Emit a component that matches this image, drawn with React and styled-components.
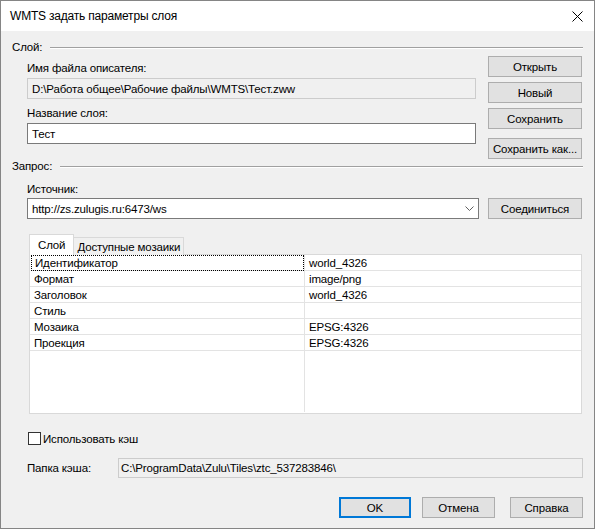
import React from "react";
import styled, { createGlobalStyle } from "styled-components";

const GlobalStyle = createGlobalStyle`
  html, body {
    margin: 0;
    padding: 0;
    background: #ffffff;
  }
  body {
    font-family: "Liberation Sans", Arial, sans-serif;
    font-size: 11.5px;
    letter-spacing: -0.15px;
    color: #000000;
  }
`;

const Window = styled.div`
  width: 595px;
  height: 529px;
  box-sizing: border-box;
  border: 1px solid #858585;
  display: flex;
  flex-direction: column;
  background: #f0f0f0;
`;

const TitleBar = styled.div`
  height: 30px;
  background: #ffffff;
  display: flex;
  align-items: center;
  justify-content: space-between;
  padding: 0 11px 0 9px;
  font-size: 12px;
  letter-spacing: -0.2px;
`;

const Body = styled.div`
  flex: 1;
  display: flex;
  flex-direction: column;
  padding: 0 11px 0 11px;
`;

const GroupHeader = styled.div`
  display: flex;
  align-items: center;
  height: 15px;
  margin-top: ${(p) => p.$top || 0}px;
  line-height: 15px;

  &::after {
    content: "";
    flex: 1;
    margin-left: 8px;
    height: 0;
    border-top: 1px solid #a0a0a0;
    border-bottom: 1px solid #ffffff;
  }
`;

const TopBlock = styled.div`
  display: grid;
  grid-template-columns: 449px 94px;
  column-gap: 12px;
  padding-left: 15px;
  margin-top: 1px;
`;

const Column = styled.div`
  display: flex;
  flex-direction: column;
`;

const Label = styled.div`
  line-height: 14px;
  height: 14px;
  margin-top: ${(p) => p.$top || 0}px;
  white-space: nowrap;
`;

const Field = styled.div`
  box-sizing: border-box;
  height: ${(p) => p.$h || 21}px;
  margin-top: ${(p) => p.$top || 0}px;
  width: ${(p) => (p.$w ? p.$w + "px" : "auto")};
  flex: ${(p) => (p.$grow ? 1 : "none")};
  border: 1px solid ${(p) => (p.$readonly ? "#cccccc" : "#7a7a7a")};
  background: ${(p) => (p.$readonly ? "#f0f0f0" : "#ffffff")};
  display: flex;
  align-items: center;
  padding-left: ${(p) => p.$pad || 4}px;
  white-space: nowrap;
  overflow: hidden;
`;

const Button = styled.div`
  box-sizing: border-box;
  height: 21px;
  width: ${(p) => p.$w || 94}px;
  margin-top: ${(p) => p.$top || 0}px;
  margin-left: ${(p) => p.$left || 0}px;
  background: #e1e1e1;
  border: ${(p) => (p.$default ? "2px solid #0078d7" : "1px solid #adadad")};
  display: flex;
  align-items: center;
  justify-content: center;
  white-space: nowrap;
`;

const Row = styled.div`
  display: flex;
  align-items: center;
  margin-top: ${(p) => p.$top || 0}px;
  padding-left: ${(p) => p.$indent || 0}px;
  justify-content: ${(p) => p.$justify || "flex-start"};
`;

const Combo = styled(Field)`
  justify-content: space-between;
  padding-right: 4px;
`;

const Tabs = styled.div`
  display: flex;
  align-items: flex-end;
  height: 21px;
  margin-top: 15px;
  margin-left: 17px;
`;

const Tab = styled.div`
  box-sizing: border-box;
  height: ${(p) => (p.$active ? 21 : 18)}px;
  padding: 0 ${(p) => (p.$active ? 8 : 3)}px;
  display: flex;
  align-items: center;
  background: ${(p) => (p.$active ? "#ffffff" : "#f0f0f0")};
  border: 1px solid #d9d9d9;
  border-bottom: none;
  margin-left: ${(p) => (p.$active ? 0 : -1)}px;
  position: relative;
  z-index: ${(p) => (p.$active ? 2 : 1)};
`;

const List = styled.div`
  box-sizing: border-box;
  width: 553px;
  height: 160px;
  margin-left: 17px;
  margin-top: -1px;
  border: 1px solid #d9d9d9;
  background: #ffffff;
  display: grid;
  grid-template-columns: 274px 1fr;
  grid-auto-rows: 16px;
  align-content: start;
  position: relative;

  &::before {
    content: "";
    position: absolute;
    left: 274px;
    top: 0;
    bottom: 1px;
    border-left: 1px solid #e3e3e3;
  }
`;

const Cell = styled.div`
  box-sizing: border-box;
  height: 16px;
  line-height: 16px;
  border-bottom: 1px solid #e3e3e3;
  padding-left: ${(p) => (p.$value ? 5 : 4)}px;
  white-space: nowrap;
  outline: ${(p) => (p.$focus ? "1px dotted #000000" : "none")};
  outline-offset: -1px;
  margin-left: ${(p) => (p.$focus ? 1 : 0)}px;
`;

const CheckRow = styled.label`
  display: flex;
  align-items: center;
  margin-top: 18px;
  padding-left: 16px;
  height: 13px;
`;

const Box = styled.span`
  box-sizing: border-box;
  width: 13px;
  height: 13px;
  border: 1px solid #333333;
  background: #ffffff;
  margin-right: 2px;
`;

const CacheLabel = styled.div`
  width: 91px;
  padding-left: 15px;
  box-sizing: content-box;
`;

const rows = [
  ["Идентификатор", "world_4326"],
  ["Формат", "image/png"],
  ["Заголовок", "world_4326"],
  ["Стиль", ""],
  ["Мозаика", "EPSG:4326"],
  ["Проекция", "EPSG:4326"]
];

export default function App() {
  return (
    <>
      <GlobalStyle />
      <Window>
        <TitleBar>
          <span>WMTS задать параметры слоя</span>
          <svg width="11" height="11" viewBox="0 0 11 11">
            <path d="M0.5 0.5 L10.5 10.5 M10.5 0.5 L0.5 10.5" stroke="#000" strokeWidth="1" fill="none" />
          </svg>
        </TitleBar>
        <Body>
          <GroupHeader $top={9}>Слой:</GroupHeader>
          <TopBlock>
            <Column>
              <Label $top={5}>Имя файла описателя:</Label>
              <Field $readonly $top={3}>D:\Работа общее\Рабочие файлы\WMTS\Тест.zww</Field>
              <Label $top={7}>Название слоя:</Label>
              <Field $top={3}>Тест</Field>
            </Column>
            <Column>
              <Button>Открыть</Button>
              <Button $top={5}>Новый</Button>
              <Button $top={5}>Сохранить</Button>
              <Button $top={9}>Сохранить как...</Button>
            </Column>
          </TopBlock>
          <GroupHeader>Запрос:</GroupHeader>
          <Row $indent={15} $top={0}>
            <Label $top={8}>Источник:</Label>
          </Row>
          <Row $indent={15} $top={2}>
            <Combo $w={452}>
              <span>http://zs.zulugis.ru:6473/ws</span>
              <svg width="9" height="5" viewBox="0 0 9 5">
                <polyline points="0.5,0.5 4.5,4.5 8.5,0.5" stroke="#606060" strokeWidth="1" fill="none" />
              </svg>
            </Combo>
            <Button $left={9}>Соединиться</Button>
          </Row>
          <Tabs>
            <Tab $active>Слой</Tab>
            <Tab>Доступные мозаики</Tab>
          </Tabs>
          <List>
            {rows.map(([k, v], i) => (
              <React.Fragment key={k}>
                <Cell $focus={i === 0}>{k}</Cell>
                <Cell $value>{v}</Cell>
              </React.Fragment>
            ))}
          </List>
          <CheckRow>
            <Box />
            Использовать кэш
          </CheckRow>
          <Row $top={13}>
            <CacheLabel>Папка кэша:</CacheLabel>
            <Field $readonly $grow $h={20} $pad={2}>C:\ProgramData\Zulu\Tiles\ztc_537283846\</Field>
          </Row>
          <Row $top={19} $justify="flex-end">
            <Button $default $w={72}>OK</Button>
            <Button $w={73} $left={11}>Отмена</Button>
            <Button $w={73} $left={15}>Справка</Button>
          </Row>
        </Body>
      </Window>
    </>
  );
}
